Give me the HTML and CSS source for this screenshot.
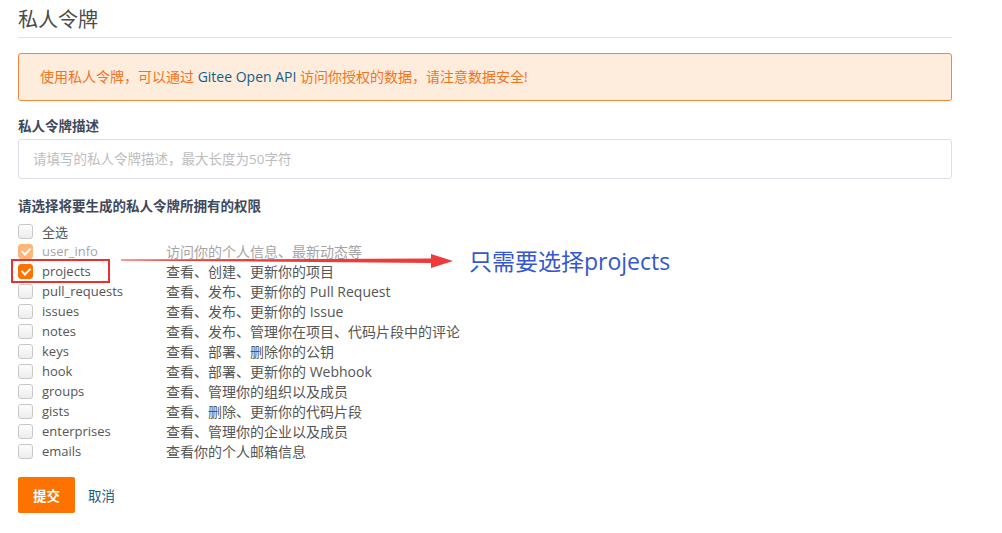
FILE: index.html
```html
<!DOCTYPE html>
<html>
<head>
	<meta charset="utf-8">
	<title>私人令牌</title>
	<link rel="stylesheet" href="styles.css">
</head>
<body>
	<div class="page">
		<h1 class="page-title">私人令牌</h1>

		<div class="alert">
			使用私人令牌，可以通过 <span class="alert-link">Gitee Open API</span> 访问你授权的数据，请注意数据安全!
		</div>

		<form action="#">
			<div class="field">
				<label class="field-label" for="token-desc">私人令牌描述</label>
				<input id="token-desc" class="text-input" type="text" placeholder="请填写的私人令牌描述，最大长度为50字符">
			</div>

			<div class="field">
				<div class="field-label">请选择将要生成的私人令牌所拥有的权限</div>
				<ul class="scopes">
					<li class="scope">
						<span class="box"></span>
						<span class="scope-name">全选</span>
					</li>
					<li class="scope disabled">
						<span class="box checked"></span>
						<span class="scope-name">user_info</span>
						<span class="scope-desc">访问你的个人信息、最新动态等</span>
					</li>
					<li class="scope highlighted">
						<span class="box checked"></span>
						<span class="scope-name">projects</span>
						<span class="scope-desc">查看、创建、更新你的项目</span>
						<span class="mark-box"></span>
						<svg class="mark-arrow" width="340" height="16" viewBox="0 0 340 16">
							<polygon points="0,6.6 310,5.5 310,1 332,8 310,15 310,10 0,7.4" fill="#f03a3a"/>
						</svg>
						<span class="mark-note">只需要选择projects</span>
					</li>
					<li class="scope">
						<span class="box"></span>
						<span class="scope-name">pull_requests</span>
						<span class="scope-desc">查看、发布、更新你的 Pull Request</span>
					</li>
					<li class="scope">
						<span class="box"></span>
						<span class="scope-name">issues</span>
						<span class="scope-desc">查看、发布、更新你的 Issue</span>
					</li>
					<li class="scope">
						<span class="box"></span>
						<span class="scope-name">notes</span>
						<span class="scope-desc">查看、发布、管理你在项目、代码片段中的评论</span>
					</li>
					<li class="scope">
						<span class="box"></span>
						<span class="scope-name">keys</span>
						<span class="scope-desc">查看、部署、删除你的公钥</span>
					</li>
					<li class="scope">
						<span class="box"></span>
						<span class="scope-name">hook</span>
						<span class="scope-desc">查看、部署、更新你的 Webhook</span>
					</li>
					<li class="scope">
						<span class="box"></span>
						<span class="scope-name">groups</span>
						<span class="scope-desc">查看、管理你的组织以及成员</span>
					</li>
					<li class="scope">
						<span class="box"></span>
						<span class="scope-name">gists</span>
						<span class="scope-desc">查看、删除、更新你的代码片段</span>
					</li>
					<li class="scope">
						<span class="box"></span>
						<span class="scope-name">enterprises</span>
						<span class="scope-desc">查看、管理你的企业以及成员</span>
					</li>
					<li class="scope">
						<span class="box"></span>
						<span class="scope-name">emails</span>
						<span class="scope-desc">查看你的个人邮箱信息</span>
					</li>
				</ul>
			</div>

			<div class="actions">
				<button class="btn-submit" type="submit">提交</button>
				<a class="btn-cancel" href="#">取消</a>
			</div>
		</form>
	</div>
</body>
</html>
```

FILE: styles.css
```css
body {
	margin: 0;
	padding: 0;
	font-family: "Open Sans", "Noto Sans CJK SC", sans-serif;
	font-size: 14px;
	color: #555;
	background-color: white;
}
.page {
	width: 934px;
	padding: 8px 0 0 18px;
}
.page-title {
	margin: 0;
	padding-bottom: 5px;
	font-size: 20px;
	font-weight: normal;
	line-height: 24px;
	color: #4a4a4a;
	border-bottom: solid 1px #e3e3e3;
}
.alert {
	margin-top: 15px;
	padding: 0 21px;
	height: 46px;
	line-height: 46px;
	font-size: 14px;
	color: #f5721e;
	background-color: #feeddd;
	border: solid 1px #f5863d;
	border-radius: 3px;
}
.alert-link {
	color: #145d8a;
}
form {
	margin: 0;
}
.field {
	margin-top: 16px;
}
.field-label {
	display: block;
	font-size: 13.5px;
	font-weight: bold;
	line-height: 18px;
	color: #40485b;
}
.text-input {
	display: block;
	box-sizing: border-box;
	margin-top: 4px;
	padding: 0 14px;
	width: 100%;
	height: 40px;
	font-family: inherit;
	font-size: 13.5px;
	border: solid 1px #dcdfe6;
	border-radius: 3px;
	outline: none;
}
.text-input::placeholder {
	color: #bdbdbd;
}
.field + .field {
	margin-top: 18px;
}
.scopes {
	margin: 6px 0 0;
	padding: 0;
	list-style: none;
}
.scope {
	position: relative;
	display: flex;
	align-items: center;
	height: 20px;
	font-size: 13px;
	color: #555;
}
.scope.disabled {
	color: #a5a5a5;
}
.box {
	position: relative;
	box-sizing: border-box;
	width: 15px;
	height: 15px;
	flex-shrink: 0;
	background: linear-gradient(#fdfdfd, #ececec);
	border: solid 1px #c8c8c8;
	border-radius: 3px;
}
.box.checked {
	background: #fe7300;
	border-color: #fe7300;
}
.disabled .box.checked {
	background: #ffb57a;
	border-color: #ffb57a;
}
.box.checked:after {
	content: "";
	position: absolute;
	left: 3.5px;
	top: 1.5px;
	width: 4px;
	height: 7px;
	border: solid white;
	border-width: 0 2px 2px 0;
	transform: rotate(45deg);
}
.scope-name {
	width: 124px;
	margin-left: 9px;
}
.scope-desc {
	font-size: 14px;
}
.mark-box {
	position: absolute;
	left: -7px;
	top: -2px;
	width: 95px;
	height: 20px;
	border: solid 2px #ee2f2f;
}
.mark-arrow {
	position: absolute;
	left: 103px;
	top: -8px;
}
.mark-note {
	position: absolute;
	left: 451px;
	top: -14px;
	font-size: 23px;
	line-height: 28px;
	color: #3457cf;
	white-space: nowrap;
}
.actions {
	display: flex;
	align-items: center;
	margin-top: 16px;
}
.btn-submit {
	padding: 0;
	width: 57px;
	height: 36px;
	font-family: inherit;
	font-size: 13.5px;
	font-weight: bold;
	color: white;
	background-color: #fe7300;
	border: 0;
	border-radius: 2px;
	cursor: pointer;
}
.btn-cancel {
	margin-left: 13px;
	font-size: 13.5px;
	color: #145d8a;
	text-decoration: none;
}
```
